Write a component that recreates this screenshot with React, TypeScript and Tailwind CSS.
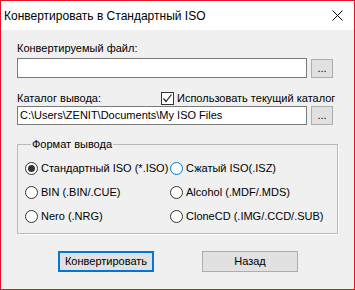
function Radio({ checked, focus, label }: { checked?: boolean; focus?: boolean; label: string }) {
  return (
    <div className="flex items-center gap-[3px] h-[24px]">
      <span
        className={`w-[13px] h-[13px] rounded-full border bg-white flex items-center justify-center shrink-0 ${
          focus ? "border-[#0078d7]" : "border-[#333333]"
        }`}
      >
        {checked && <span className="w-[7px] h-[7px] rounded-full bg-[#333333]" />}
      </span>
      <span className="whitespace-nowrap">{label}</span>
    </div>
  );
}

export default function App() {
  return (
    <div className="w-[355px] h-[290px] border border-[#e81123] bg-[#f0f0f0] flex flex-col font-['Liberation_Sans',Arial,sans-serif] text-[11px] leading-[13px] text-black">
      <div className="h-[29px] bg-white flex items-center justify-between pl-[3px] pr-[11px] shrink-0">
        <span className="text-[12px] leading-[16px]">Конвертировать в Стандартный ISO</span>
        <svg width="11" height="11" viewBox="0 0 11 11" className="block">
          <path d="M0.5 0.5 L10.5 10.5 M10.5 0.5 L0.5 10.5" stroke="#000" strokeWidth="1" />
        </svg>
      </div>

      <div className="flex-1 px-[16px] pt-[12px]">
        <div>Конвертируемый файл:</div>
        <div className="mt-[3px] flex items-center gap-[4px]">
          <div className="w-[290px] h-[20px] bg-white border border-[#7a7a7a]" />
          <button className="w-[22px] h-[19px] bg-[#e1e1e1] border border-[#adadad] text-[11px] leading-[11px] flex items-end justify-center pb-[3px]">
            ...
          </button>
        </div>

        <div className="mt-[14px] flex items-center h-[13px]">
          <span className="w-[144px]">Каталог вывода:</span>
          <span className="w-[13px] h-[13px] border border-[#333333] bg-white flex items-center justify-center">
            <svg width="11" height="11" viewBox="0 0 11 11">
              <path d="M1.5 5.5 L4 8.5 L9.5 1.5" fill="none" stroke="#222" strokeWidth="1.2" />
            </svg>
          </span>
          <span className="ml-[3px] whitespace-nowrap">Использовать текущий каталог</span>
        </div>
        <div className="mt-[1px] flex items-center gap-[4px]">
          <div className="w-[290px] h-[19px] bg-white border border-[#7a7a7a] flex items-center pl-[2px] whitespace-nowrap overflow-hidden">
            C:\Users\ZENIT\Documents\My ISO Files
          </div>
          <button className="w-[22px] h-[19px] bg-[#e1e1e1] border border-[#adadad] text-[11px] leading-[11px] flex items-end justify-center pb-[3px]">
            ...
          </button>
        </div>

        <fieldset className="mt-[13px] w-[321px] border border-[#b9b9b9] shadow-[1px_1px_0_#ffffff] px-[7px] pt-[5px] pb-[5px]">
          <legend className="ml-[6px] px-[1px] leading-[13px]">Формат вывода</legend>
          <div className="grid grid-cols-[145px_1fr]">
            <Radio checked label="Стандартный ISO (*.ISO)" />
            <Radio focus label="Сжатый ISO(.ISZ)" />
            <Radio label="BIN (.BIN/.CUE)" />
            <Radio label="Alcohol (.MDF/.MDS)" />
            <Radio label="Nero (.NRG)" />
            <Radio label="CloneCD (.IMG/.CCD/.SUB)" />
          </div>
        </fieldset>

        <div className="mt-[17px] ml-[41px] flex gap-[48px]">
          <button className="w-[96px] h-[21px] bg-[#e1e1e1] border-2 border-[#0078d7] text-[11px]">
            Конвертировать
          </button>
          <button className="w-[96px] h-[21px] bg-[#e1e1e1] border border-[#adadad] text-[11px]">
            Назад
          </button>
        </div>
      </div>
    </div>
  );
}
